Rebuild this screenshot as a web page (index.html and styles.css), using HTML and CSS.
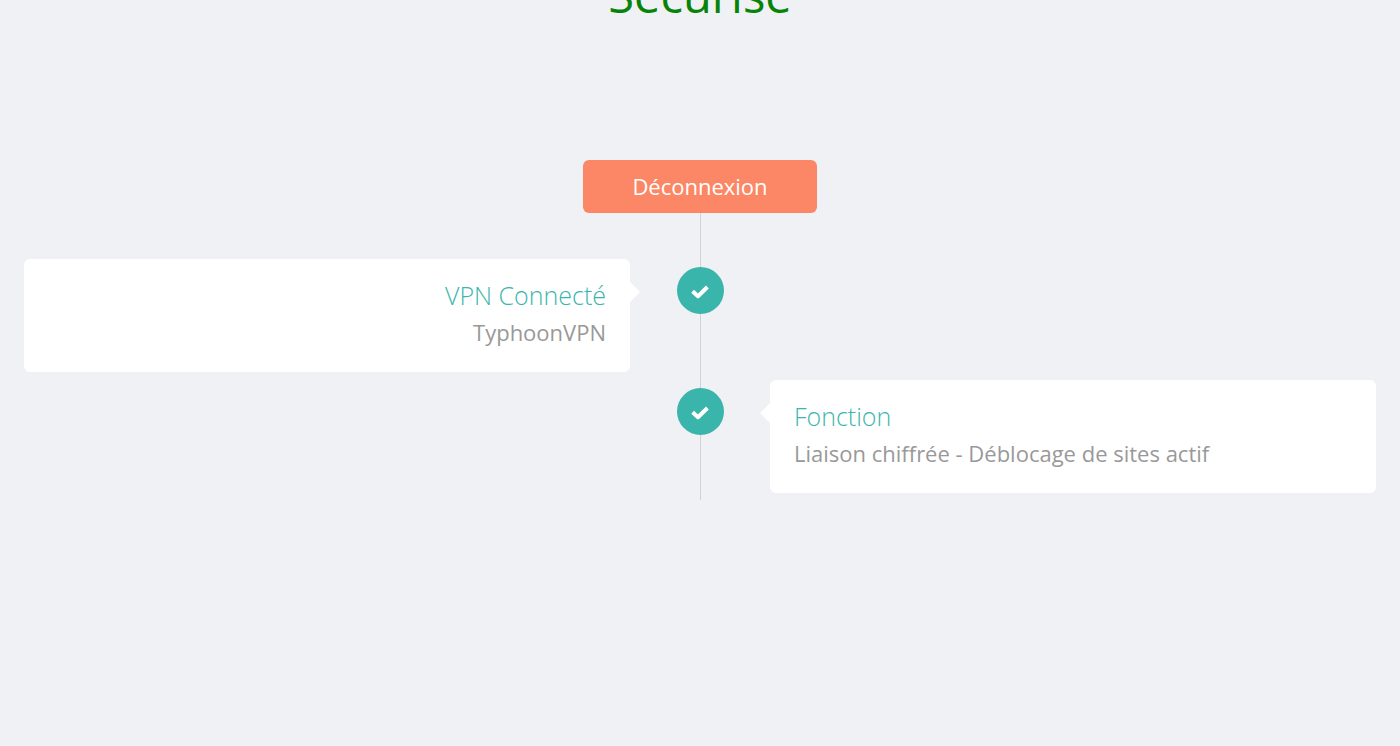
FILE: index.html
```html
<!DOCTYPE html>
<html lang="fr">
<head>
<meta charset="utf-8">
<meta name="viewport" content="width=device-width, initial-scale=1">
<title>TyphoonVPN</title>
<link rel="stylesheet" href="styles.css">
</head>
<body>
<main class="page">
  <h1 class="status">Sécurisé</h1>
  <button class="disconnect" type="button">Déconnexion</button>
  <ol class="timeline">
    <li class="step">
      <section class="card card-left">
        <h2 class="card-title">VPN Connecté</h2>
        <p class="card-text">TyphoonVPN</p>
      </section>
      <span class="dot"><svg class="check" viewBox="0 0 20 20" aria-hidden="true"><path d="M2.600 10.200 L8 15.200 L17.400 6"/></svg></span>
    </li>
    <li class="step">
      <span class="dot"><svg class="check" viewBox="0 0 20 20" aria-hidden="true"><path d="M2.600 10.200 L8 15.200 L17.400 6"/></svg></span>
      <section class="card card-right">
        <h2 class="card-title">Fonction</h2>
        <p class="card-text">Liaison chiffrée - Déblocage de sites actif</p>
      </section>
    </li>
  </ol>
</main>
</body>
</html>
```
FILE: styles.css
```css
* {
  box-sizing: border-box;
}

body {
  margin: 0;
  background: #eff1f5;
  font-family: "Open Sans", "Noto Sans", sans-serif;
}

.page {
  display: flex;
  flex-direction: column;
  align-items: center;
  padding: 0 24px;
}

.status {
  margin: -35px 0 135px;
  color: #078407;
  font-size: 47px;
  font-weight: 400;
  line-height: 60px;
}

.disconnect {
  min-width: 234px;
  padding: 10px 48px;
  border: 0;
  border-radius: 6px;
  background: #fb8766;
  color: #fff;
  font: inherit;
  font-size: 22px;
  line-height: 33px;
  cursor: pointer;
}

.timeline {
  display: flex;
  flex-direction: column;
  gap: 8px;
  width: 100%;
  margin: 0;
  padding: 46px 0 7px;
  list-style: none;
  background: linear-gradient(#d0d2d6, #d0d2d6) center top / 1px 100% no-repeat;
}

.step {
  display: grid;
  grid-template-columns: 1fr 140px 1fr;
}

.card {
  position: relative;
  padding: 17px 24px 21px;
  border-radius: 6px;
  background: #fff;
}

.card::after {
  content: "";
  position: absolute;
  top: 23px;
  width: 10px;
  height: 20px;
  background: #fff;
}

.card-left {
  grid-column: 1;
  text-align: right;
}

.card-left::after {
  left: 100%;
  clip-path: polygon(0 0, 100% 50%, 0 100%);
}

.card-right {
  grid-column: 3;
}

.card-right::after {
  right: 100%;
  clip-path: polygon(100% 0, 0 50%, 100% 100%);
}

.card-title {
  margin: 0;
  color: #3cb6ac;
  font-size: 25px;
  font-weight: 300;
  line-height: 38px;
}

.card-text {
  margin: 0;
  color: #999;
  font-size: 22px;
  line-height: 37px;
}

.dot {
  grid-column: 2;
  display: flex;
  align-items: center;
  justify-content: center;
  justify-self: center;
  width: 47px;
  height: 47px;
  margin-top: 8px;
  border-radius: 50%;
  background: #3ab5ac;
}

.check {
  width: 20px;
  height: 20px;
  fill: none;
  stroke: #fff;
  stroke-width: 4;
  stroke-linejoin: round;
}
```
